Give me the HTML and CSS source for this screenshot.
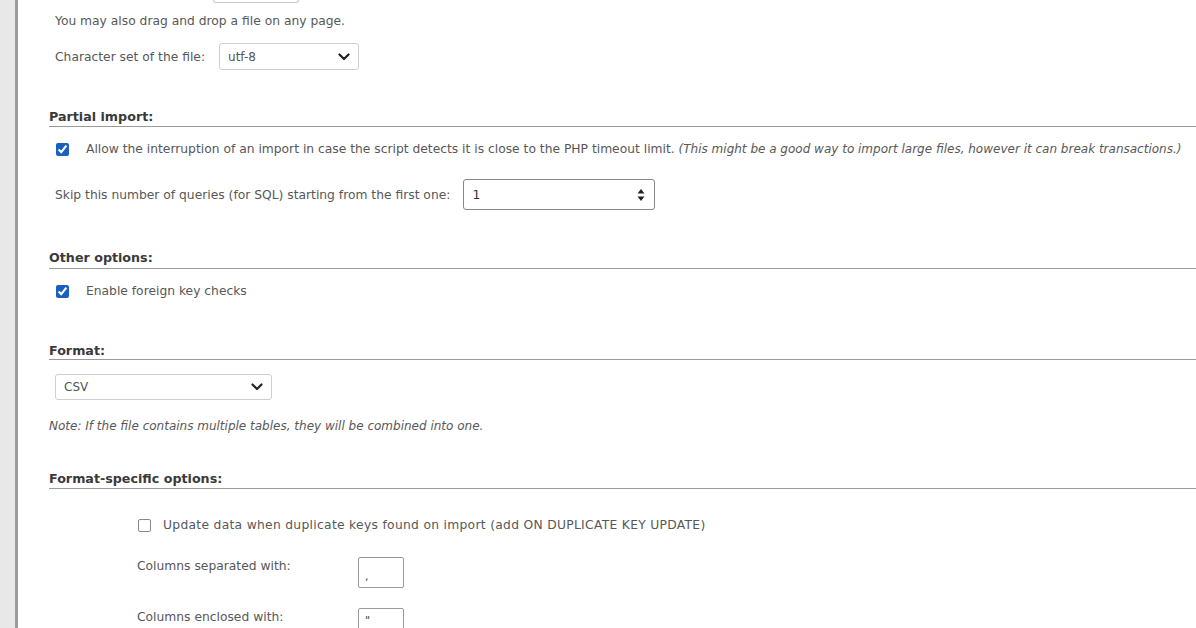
FILE: index.html
```html
<!DOCTYPE html>
<html>
<head>
<meta charset="utf-8">
<link rel="stylesheet" href="styles.css">
</head>
<body>
<div class="page">
  <div class="sidebar"></div>
  <div class="main">
    <div class="btn-stub"></div>
    <div class="hint">You may also drag and drop a file on any page.</div>
    <div class="row charset-row">
      <span class="label">Character set of the file:</span>
      <span class="select select-charset"><span class="sel-text">utf-8</span><svg class="chev" width="12" height="8" viewBox="0 0 12 8"><path d="M1.5 1.5 L6 6 L10.5 1.5" fill="none" stroke="#222" stroke-width="2.2" stroke-linecap="round" stroke-linejoin="round"/></svg></span>
    </div>

    <div class="legend legend-partial">Partial import:</div>
    <div class="row check-row">
      <input type="checkbox" class="cb" checked>
      <span class="cb-label">Allow the interruption of an import in case the script detects it is close to the PHP timeout limit. <i class="it">(This might be a good way to import large files, however it can break transactions.)</i></span>
    </div>
    <div class="row skip-row">
      <span class="label">Skip this number of queries (for SQL) starting from the first one:</span>
      <span class="number"><span class="num-text">1</span><svg class="spin" width="8" height="14" viewBox="0 0 8 14"><path d="M4 1 L7.5 5.5 L0.5 5.5 Z M4 13 L7.5 8.5 L0.5 8.5 Z" fill="#222"/></svg></span>
    </div>

    <div class="legend legend-other">Other options:</div>
    <div class="row check-row check-fk">
      <input type="checkbox" class="cb" checked>
      <span class="cb-label">Enable foreign key checks</span>
    </div>

    <div class="legend legend-format">Format:</div>
    <div class="row format-row">
      <span class="select select-format"><span class="sel-text">CSV</span><svg class="chev" width="12" height="8" viewBox="0 0 12 8"><path d="M1.5 1.5 L6 6 L10.5 1.5" fill="none" stroke="#222" stroke-width="2.2" stroke-linecap="round" stroke-linejoin="round"/></svg></span>
    </div>
    <div class="note"><i class="it">Note: If the file contains multiple tables, they will be combined into one.</i></div>

    <div class="legend legend-specific">Format-specific options:</div>
    <div class="specific">
      <div class="row check-row check-dup">
        <input type="checkbox" class="cb cb-off">
        <span class="cb-label dup-label">Update data when duplicate keys found on import (add ON DUPLICATE KEY UPDATE)</span>
      </div>
      <div class="field-row field-sep">
        <span class="field-label">Columns separated with:</span>
        <span class="small-input">,</span>
      </div>
      <div class="field-row field-enc">
        <span class="field-label">Columns enclosed with:</span>
        <span class="small-input">"</span>
      </div>
    </div>
  </div>
</div>
</body>
</html>
```

FILE: styles.css
```css
html, body {
  margin: 0;
  padding: 0;
  background: #ffffff;
}
body {
  font-family: "DejaVu Sans", "Liberation Sans", sans-serif;
  font-size: 12.3px;
  color: #585858;
  overflow: hidden;
}
.page {
  display: flex;
  height: 628px;
}
.sidebar {
  width: 15px;
  flex: none;
  background: #e8e8e8;
  border-right: 3px solid #9c9c9c;
}
.main {
  flex: 1;
  padding-left: 31px;
  min-width: 0;
}
.btn-stub {
  margin-left: 164px;
  width: 84px;
  height: 2px;
  border: 1px solid #c8c8c8;
  border-top: none;
  border-radius: 0 0 3px 3px;
}
.hint {
  margin-left: 6px;
  margin-top: 11px;
  line-height: 14px;
  font-size: 12.3px;
}
.row {
  display: flex;
  align-items: center;
  margin-left: 6px;
}
.label {
  line-height: 14px;
  font-size: 12.3px;
}
.charset-row {
  margin-top: 15px;
  gap: 14px;
}
.select {
  display: flex;
  align-items: center;
  justify-content: space-between;
  box-sizing: border-box;
  border: 1px solid #cfcfcf;
  border-radius: 3px;
  padding: 0 8px 0 8px;
  background: #fff;
  color: #555;
  font-size: 12px;
}
.select-charset {
  width: 140px;
  height: 27px;
}
.select-format {
  width: 217px;
  height: 26px;
}
.legend {
  font-weight: bold;
  color: #3a3a3a;
  font-size: 12.7px;
  line-height: 16px;
  padding-bottom: 2px;
  border-bottom: 1px solid #9a9a9a;
}
.legend-partial { margin-top: 39px; padding-bottom: 1px; }
.legend-other { margin-top: 40px; }
.legend-format { margin-top: 44px; padding-bottom: 0; }
.legend-specific { margin-top: 38px; padding-bottom: 1px; }

.check-row {
  height: 16px;
  margin-top: 14px;
}
.cb {
  width: 13px;
  height: 13px;
  margin: 0 17px 0 1px;
  accent-color: #1b5fbf;
  flex: none;
}
.cb-label {
  line-height: 14px;
  font-size: 12.3px;
  white-space: nowrap;
}
.it {
  font-size: 12px;
}
.dup-label {
  letter-spacing: 0.3px;
}
.skip-row {
  margin-top: 22px;
  gap: 13px;
}
.number {
  display: flex;
  align-items: center;
  justify-content: space-between;
  box-sizing: border-box;
  width: 192px;
  height: 31px;
  border: 1px solid #888;
  border-radius: 3px;
  padding: 0 9px 0 8px;
  color: #333;
}
.check-fk { margin-top: 14px; }
.format-row { margin-top: 14px; }
.note {
  margin-top: 19px;
  line-height: 14px;
  font-size: 12px;
}
.specific {
  margin-left: 82px;
}
.check-dup { margin-top: 28px; margin-left: 6px; }
.check-dup .cb { margin-right: 12px; }
.cb-off {
  appearance: none;
  box-sizing: border-box;
  border: 1px solid #888;
  border-radius: 2px;
  background: #fff;
}
.field-row {
  display: flex;
  align-items: flex-start;
  margin-left: 6px;
}
.field-sep { margin-top: 24px; }
.field-enc { margin-top: 20px; }
.field-label {
  width: 221px;
  flex: none;
  line-height: 14px;
  font-size: 12.3px;
  padding-top: 2px;
}
.small-input {
  box-sizing: border-box;
  width: 46px;
  height: 31px;
  border: 1px solid #9a9a9a;
  border-radius: 2px;
  padding: 12px 0 0 6px;
  font-size: 11px;
  line-height: 14px;
  color: #444;
}
.field-enc .small-input { padding-top: 5px; }
```
